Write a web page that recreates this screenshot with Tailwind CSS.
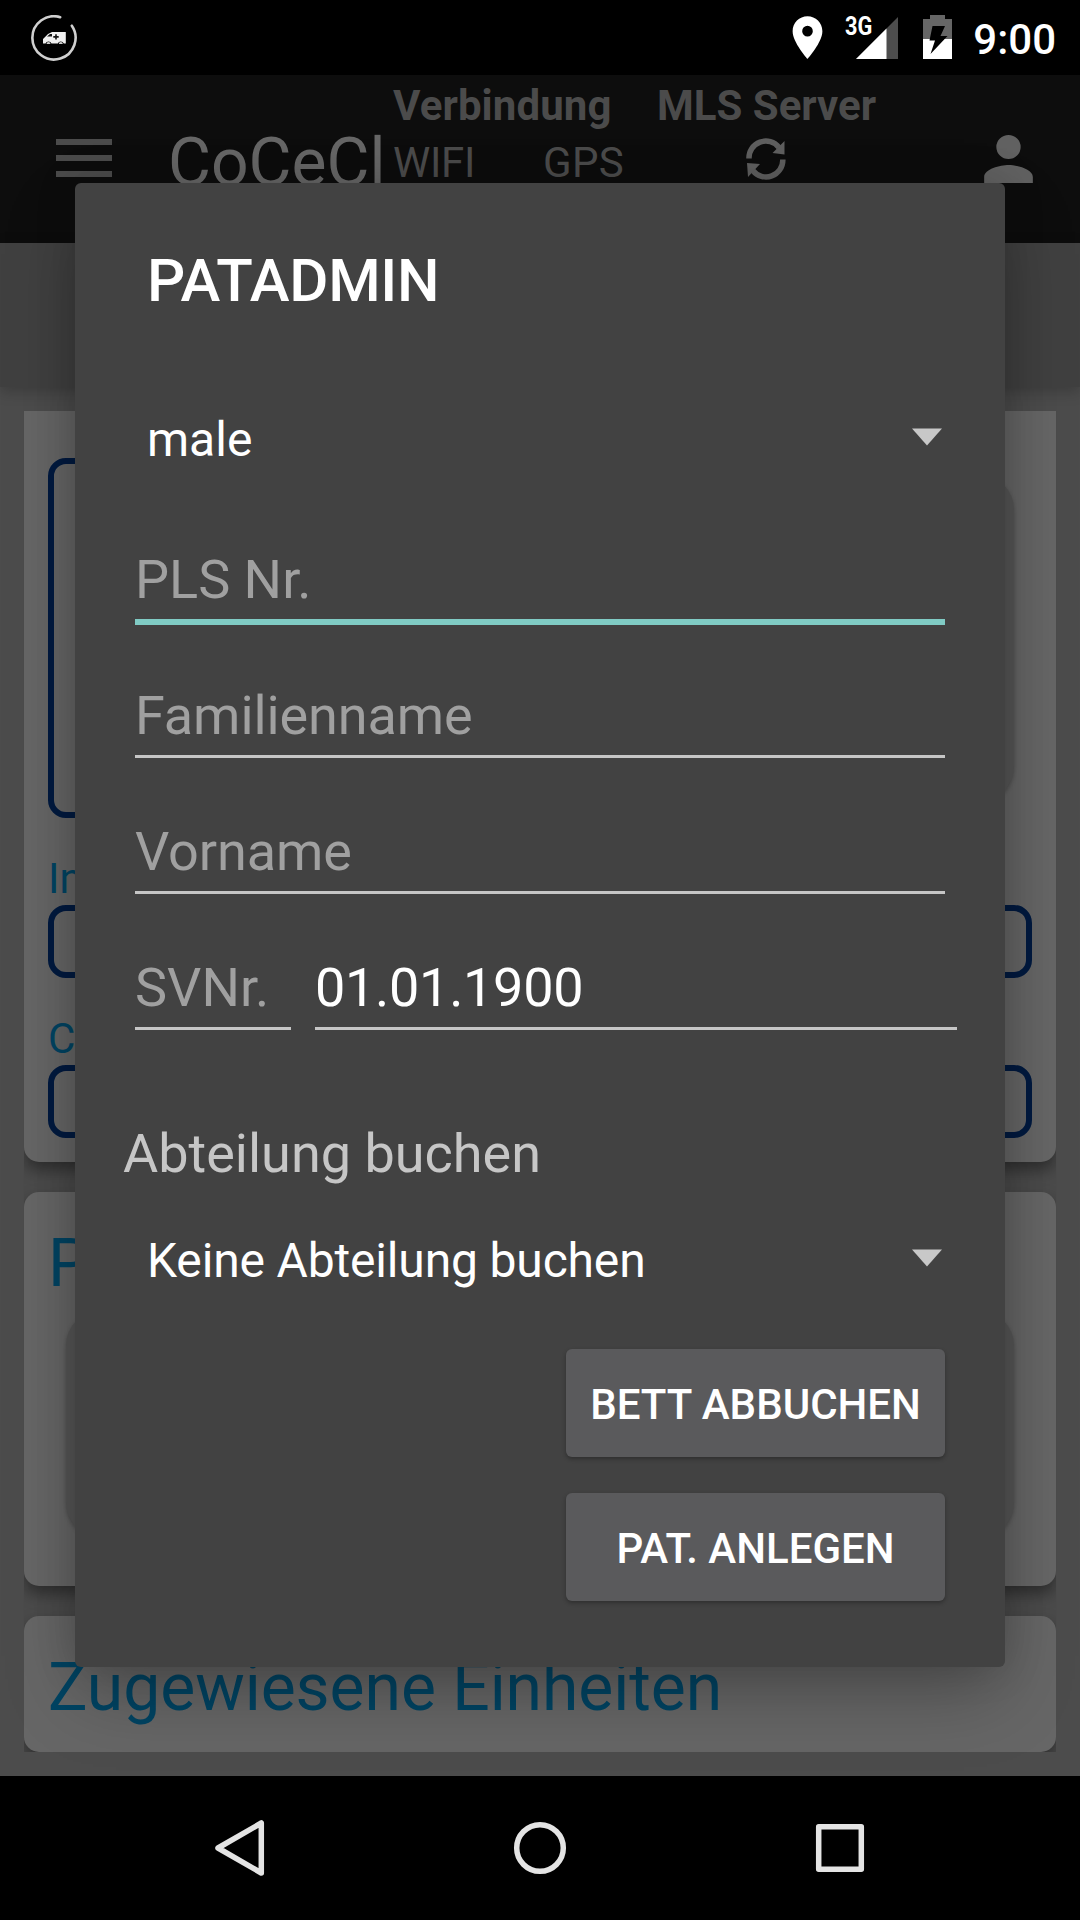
<!DOCTYPE html>
<html lang="de">
<head>
<meta charset="utf-8">
<title>CoCeCl</title>
<script src="https://cdn.jsdelivr.net/npm/@tailwindcss/browser@4"></script>
</head>
<body class="bg-black">
<div class="relative flex h-[1920px] w-[1080px] flex-col overflow-hidden bg-black font-['Roboto',sans-serif]">

  <!-- Status bar -->
  <div class="flex h-[75px] shrink-0 items-start justify-between bg-black pr-[24px] pl-[31px]">
    <svg class="mt-[15px]" width="47" height="47" viewBox="0 0 47 47" fill="none">
      <path d="M29.200 2.200A21.600 21.600 0 1 0 40.800 10.700" stroke="#cfcfcf" stroke-width="2.600" stroke-linecap="round"/>
      <path d="M12 28.500V24l5-5 4-2H34.800V28.500h-2a3.200 3.200 0 0 0-6 0h-6.300a3.200 3.200 0 0 0-6 0z" fill="#f0f0f0"/>
      <path d="M16 21.500l3-2.500h2v2.500zM24.200 19.200h1.600v1.900h1.900v1.600h-1.900v1.900h-1.600v-1.900h-1.900v-1.600h1.900z" fill="#111"/>
      <path d="M15.500 29a2 2 0 0 1 4 0zM27.800 29a2 2 0 0 1 4 0z" fill="#d0d0d0"/>
    </svg>
    <div class="flex items-start">
      <svg class="mt-[12px]" width="51" height="51" viewBox="0 0 24 24" fill="#fff"><path d="M12 2C8.130 2 5 5.130 5 9c0 5.250 7 13 7 13s7-7.750 7-13c0-3.870-3.130-7-7-7zm0 9.500a2.500 2.500 0 1 1 0-5 2.500 2.500 0 0 1 0 5z"/></svg>
      <div class="relative mt-[17px] ml-[13px] h-[42px] w-[52px]">
        <svg class="ml-[10px]" width="42" height="42" viewBox="0 0 42 42"><path d="M0 42 42 0V42z" fill="#4d4d4d"/><path d="M0 42 30.500 11.500V42z" fill="#fff"/></svg>
        <span class="absolute -top-[4px] left-[-1px] origin-left scale-x-[.87] text-[25px] leading-[28px] font-bold text-white">3G</span>
      </div>
      <svg class="mt-[15px] ml-[25px]" width="29" height="44" viewBox="0 0 29 44">
        <path d="M7 0h15v4h7v20H0V4h7z" fill="#666"/><path d="M0 24h29v20H0z" fill="#fff"/><path d="M9.500 11h12.500l-4.500 10h7L7.500 39l4.500-13.500H6.500z" fill="#000"/>
      </svg>
      <span class="mt-[16px] ml-[21px] text-[42px] leading-[48px] font-medium text-white">9:00</span>
    </div>
  </div>

  <!-- Toolbar -->
  <div class="flex h-[168px] shrink-0 items-start bg-[#0d0d0d] pl-[56px] text-[42px] leading-[48px] text-[#4b4b4b]">
    <svg class="mt-[64px] shrink-0" width="56" height="38" fill="#4b4b4b"><path d="M0 0h56v6H0zM0 16h56v6H0zM0 32h56v6H0z"/></svg>
    <div class="mt-[48px] ml-[56px] w-[217px] shrink-0 text-[66px] leading-[80px] whitespace-nowrap text-[#666]">CoCeCl</div>
    <div class="mt-[7px] ml-[8px] flex w-[264px] shrink-0 flex-col gap-[9px]">
      <span class="font-bold tracking-[0.1px]">Verbindung</span>
      <div class="flex"><span class="w-[150px] tracking-[-0.3px]">WIFI</span><span class="tracking-[0.3px]">GPS</span></div>
    </div>
    <div class="mt-[7px] flex w-[220px] shrink-0 flex-col">
      <span class="font-bold whitespace-nowrap">MLS Server</span>
      <svg class="mt-[8px] ml-[88px]" width="42" height="42" viewBox="0 0 42 42" fill="none" stroke="#5f5f5f" stroke-width="5.500">
        <path d="M4 20.500a16.800 16.800 0 0 1 30-11"/><path d="M37.800 21.500a16.800 16.800 0 0 1-30 11"/>
        <path d="M39.500 3V16.500L27.500 15z M2 25l13 1-12 13z" fill="#5f5f5f" stroke="none"/>
      </svg>
    </div>
    <svg class="mt-[48px] ml-[95px] shrink-0" width="73" height="72" viewBox="0 0 24 24" preserveAspectRatio="none" fill="#616161"><path d="M12 12a4 4 0 1 0 0-8 4 4 0 0 0 0 8zm0 2c-2.670 0-8 1.340-8 4v2h16V18c0-2.660-5.330-4-8-4z"/></svg>
  </div>

  <!-- Tab strip -->
  <div class="relative z-10 h-[144px] shrink-0 bg-[#404040] shadow-[0_4px_14px_rgba(0,0,0,0.22)]"></div>

  <!-- Scrolling content -->
  <div class="h-[1389px] shrink-0 bg-[#4c4c4c] px-[24px] pt-[24px]">
    <div class="flex h-[1341px] flex-col gap-[30px] overflow-hidden text-[#004463]">
      <div class="flex h-[751px] shrink-0 flex-col rounded-b-[15px] bg-[#666] px-[24px] pt-[47px] shadow-[0_8px_16px_rgba(0,0,0,0.4)]">
        <div class="flex h-[360px] items-center justify-between pr-[18px]">
          <div class="h-[360px] w-[460px] rounded-[18px] border-[6px] border-[#001a40]"></div>
          <div class="h-[328px] w-[460px] rounded-[36px] bg-[#575757] shadow-[0_2px_4px_rgba(0,0,0,0.25)]"></div>
        </div>
        <span class="mt-[37px] text-[42px] leading-[48px]">In</span>
        <div class="mt-[2px] h-[73px] rounded-[18px] border-[6px] border-[#001a40]"></div>
        <span class="mt-[37px] text-[42px] leading-[48px]">C</span>
        <div class="mt-[2px] h-[73px] rounded-[18px] border-[6px] border-[#001a40]"></div>
      </div>
      <div class="h-[394px] shrink-0 rounded-[15px] bg-[#666] px-[24px] pt-[32px] shadow-[0_8px_16px_rgba(0,0,0,0.4)]">
        <div class="text-[66px] leading-[80px]">P</div>
        <div class="mx-[18px] mt-[6px] h-[228px] rounded-[36px] bg-[#575757] shadow-[0_2px_4px_rgba(0,0,0,0.25)]"></div>
      </div>
      <div class="h-[136px] shrink-0 rounded-[15px] bg-[#666] px-[24px] pt-[32px] shadow-[0_8px_16px_rgba(0,0,0,0.4)]">
        <div class="text-[66px] leading-[80px] tracking-[-0.06px]">Zugewiesene Einheiten</div>
      </div>
    </div>
  </div>

  <!-- Navigation bar -->
  <div class="relative z-30 flex h-[144px] shrink-0 items-center justify-between bg-black px-[210px]">
    <svg width="60" height="60" viewBox="0 0 60 60" fill="none" stroke="#e4e4e4" stroke-width="5.500" stroke-linejoin="round"><path d="M51.300 5V55L8 30z"/></svg>
    <svg width="60" height="60" viewBox="0 0 60 60" fill="none" stroke="#e4e4e4" stroke-width="5.500"><circle cx="30" cy="30" r="23.300"/></svg>
    <svg width="60" height="60" viewBox="0 0 60 60" fill="none" stroke="#e4e4e4" stroke-width="5.500" stroke-linejoin="round"><rect x="8.700" y="8.700" width="42.600" height="42.600"/></svg>
  </div>

  <!-- Dialog -->
  <div class="absolute top-[183px] left-[75px] z-20 flex h-[1484px] w-[930px] flex-col rounded-[6px] bg-[#424242] px-[60px] text-white shadow-[0_30px_70px_-6px_rgba(0,0,0,0.27),0_0_40px_rgba(0,0,0,0.15)]">
    <div class="mt-[62px] ml-[12px] text-[60px] leading-[72px] font-medium tracking-[-0.3px]">PATADMIN</div>
    <div class="mt-[93px] flex items-start justify-between pr-[3px] pl-[12px] text-[48px] leading-[60px]">
      <span>male</span>
      <svg class="mt-[18px]" width="30" height="18" fill="#c8c8c8"><path d="M0 .5h30L15 17.500z"/></svg>
    </div>
    <div class="mt-[78px] flex flex-col text-[54px] leading-[64px] text-[#a0a0a0]">
      <div class="h-[136px]"><div>PLS Nr.</div><div class="mt-[7px] h-[6px] bg-[#80cbc4]"></div></div>
      <div class="h-[136px]"><div class="tracking-[-0.1px]">Familienname</div><div class="mt-[7px] h-[3px] bg-[#c6c6c6]"></div></div>
      <div class="h-[136px]"><div class="tracking-[-0.1px]">Vorname</div><div class="mt-[7px] h-[3px] bg-[#c6c6c6]"></div></div>
      <div class="-mr-[12px] flex gap-[24px]">
        <div class="w-[156px]"><div>SVNr.</div><div class="mt-[7px] h-[3px] bg-[#c6c6c6]"></div></div>
        <div class="flex-1"><div class="tracking-[-0.3px] text-white">01.01.1900</div><div class="mt-[7px] h-[3px] bg-[#c6c6c6]"></div></div>
      </div>
    </div>
    <div class="mt-[92px] -ml-[12px] text-[54px] leading-[64px] text-[#c6c6c6]">Abteilung buchen</div>
    <div class="mt-[45px] flex items-start justify-between pr-[3px] pl-[12px] text-[48px] leading-[60px]">
      <span class="tracking-[-0.16px]">Keine Abteilung buchen</span>
      <svg class="mt-[18px]" width="30" height="18" fill="#c8c8c8"><path d="M0 .5h30L15 17.500z"/></svg>
    </div>
    <div class="mt-[58px] flex flex-col items-end gap-[36px] text-[42px] leading-[48px] font-medium">
      <div class="flex h-[108px] w-[379px] items-start justify-center rounded-[6px] bg-[#5a5a5c] pt-[32px] whitespace-nowrap shadow-[0_2px_4px_rgba(0,0,0,0.3)]">BETT ABBUCHEN</div>
      <div class="flex h-[108px] w-[379px] items-start justify-center rounded-[6px] bg-[#5a5a5c] pt-[32px] whitespace-nowrap shadow-[0_2px_4px_rgba(0,0,0,0.3)]">PAT. ANLEGEN</div>
    </div>
  </div>
</div>
</body>
</html>
